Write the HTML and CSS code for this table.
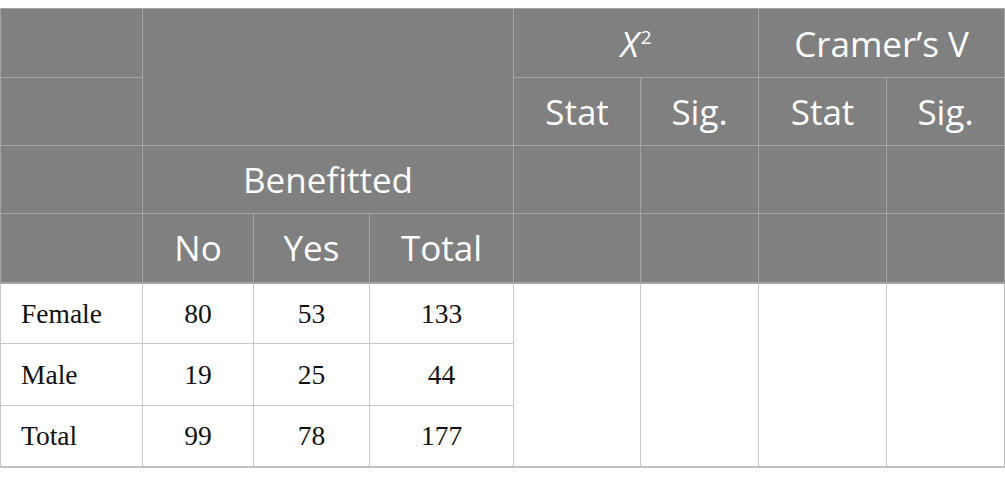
FILE: index.html
```html
<!DOCTYPE html>
<html>
<head>
<meta charset="utf-8">
<link rel="stylesheet" href="styles.css">
</head>
<body>
<table class="tbl">
  <colgroup>
    <col class="c0"><col class="c1"><col class="c2"><col class="c3">
    <col class="c4"><col class="c5"><col class="c6"><col class="c7">
  </colgroup>
  <thead>
    <tr class="h1">
      <th></th>
      <th colspan="3" rowspan="2"></th>
      <th colspan="2"><i>X</i><sup>2</sup></th>
      <th colspan="2">Cramer’s V</th>
    </tr>
    <tr class="h2">
      <th></th>
      <th>Stat</th><th>Sig.</th><th>Stat</th><th>Sig.</th>
    </tr>
    <tr class="h3">
      <th></th>
      <th colspan="3">Benefitted</th>
      <th></th><th></th><th></th><th></th>
    </tr>
    <tr class="h4">
      <th></th>
      <th>No</th><th>Yes</th><th>Total</th>
      <th></th><th></th><th></th><th></th>
    </tr>
  </thead>
  <tbody>
    <tr class="r1">
      <td class="lbl">Female</td><td>80</td><td>53</td><td>133</td>
      <td rowspan="3"></td><td rowspan="3"></td><td rowspan="3"></td><td rowspan="3"></td>
    </tr>
    <tr class="r2">
      <td class="lbl">Male</td><td>19</td><td>25</td><td>44</td>
    </tr>
    <tr class="r3">
      <td class="lbl">Total</td><td>99</td><td>78</td><td>177</td>
    </tr>
  </tbody>
</table>
</body>
</html>
```

FILE: styles.css
```css
html, body {
  margin: 0;
  padding: 0;
  background: #ffffff;
}
body {
  padding-top: 8px;
}
.tbl {
  border-collapse: collapse;
  table-layout: fixed;
  width: 1004px;
}
.c0 { width: 142px; }
.c1 { width: 111px; }
.c2 { width: 116px; }
.c3 { width: 144px; }
.c4 { width: 127px; }
.c5 { width: 118px; }
.c6 { width: 128px; }
.c7 { width: 118px; }

.tbl th {
  background: #7f807f;
  color: #ffffff;
  font-family: "Open Sans", "DejaVu Sans", sans-serif;
  font-weight: 400;
  font-size: 35px;
  text-align: center;
  vertical-align: middle;
  border: 1px solid #a4a5a4;
  padding: 0;
  line-height: 1;
}
.tbl th sup {
  font-size: 19px;
  vertical-align: top;
  position: relative;
  top: 2px;
  margin-left: 2px;
}
.h1 { height: 69px; }
.h2 { height: 68px; }
.h3 { height: 68px; }
.h4 { height: 69px; }

.tbl thead tr.h4 th {
  border-bottom: 2px solid #a6a6a6;
}

.tbl td {
  font-family: "Liberation Serif", "Times New Roman", serif;
  font-size: 27.5px;
  color: #111111;
  text-align: center;
  vertical-align: middle;
  border: 1px solid #c6c6c6;
  padding: 0;
  line-height: 1;
}
.tbl td.lbl {
  text-align: left;
  padding-left: 20px;
}
.r1 { height: 61px; }
.r2 { height: 62px; }
.r3 { height: 61px; }
.tbl tbody tr.r3 td,
.tbl tbody td[rowspan] {
  border-bottom: 2px solid #c2c2c2;
}
.tbl tbody td:last-child[rowspan] {
  border-right: 1px solid #b8b8b8;
}
```
